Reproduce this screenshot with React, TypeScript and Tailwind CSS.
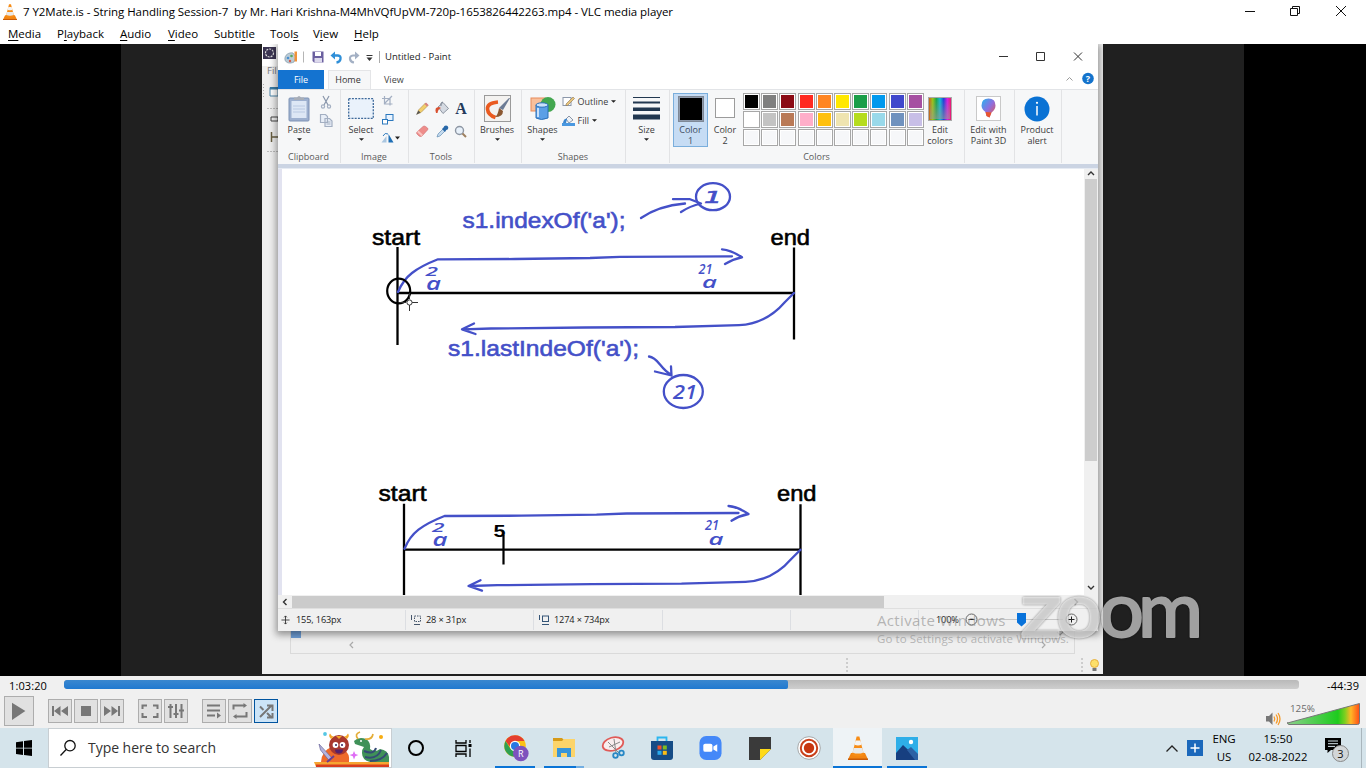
import React from "react";
import type { ReactNode } from "react";

const INK = "#4450c8";

function Cone({ className }: { className: string }) {
  return (
    <svg viewBox="0 0 20 24" preserveAspectRatio="none" className={className}>
      <path d="M3 17h14l3 6.5H0z" fill="#f28412" />
      <path d="M0 22.5h20v1.5H0z" fill="#c85a08" />
      <path d="M8.6 0.5h2.8L16 19q-6 3-12 0z" fill="#f78c16" />
      <path d="M7.6 4.5h4.8l1.1 4.2q-3.5 1.5-7 0z" fill="#f4f4f4" />
      <path d="M5.7 12h8.6l1.1 4.4q-5.4 2.4-10.8 0z" fill="#e9e9e9" />
    </svg>
  );
}

function TitleBar() {
  return (
    <div className="flex h-6 shrink-0 items-center bg-white">
      <Cone className="ml-[3px] h-[16px] w-[14px]" />
      <span className="ml-[6px] w-[655px] whitespace-pre text-[11.5px] leading-none tracking-[-0.05px] text-black">
        {"7 Y2Mate.is - String Handling Session-7  by Mr. Hari Krishna-M4MhVQfUpVM-720p-1653826442263.mp4 - VLC media player"}
      </span>
      <svg className="ml-auto h-6 w-[130px]" viewBox="1236 0 130 24" fill="none" stroke="#111" strokeWidth="1">
        <path d="M1245 11.500h10" />
        <path d="M1290.500 8.500h7v7h-7zM1292.500 8.500v-2h7v7h-2" />
        <path d="M1336 6l10 10M1346 6l-10 10" />
      </svg>
    </div>
  );
}

const menus: { pre: string; key: string; post: string; w: string }[] = [
  { pre: "", key: "M", post: "edia", w: "w-[49px]" },
  { pre: "P", key: "l", post: "ayback", w: "w-[63px]" },
  { pre: "", key: "A", post: "udio", w: "w-[48px]" },
  { pre: "", key: "V", post: "ideo", w: "w-[46px]" },
  { pre: "Subti", key: "t", post: "le", w: "w-[56px]" },
  { pre: "Tool", key: "s", post: "", w: "w-[43px]" },
  { pre: "V", key: "i", post: "ew", w: "w-[41px]" },
  { pre: "", key: "H", post: "elp", w: "w-[40px]" },
];

function MenuBar() {
  return (
    <div className="flex h-5 shrink-0 items-center bg-white pl-2 text-[11.5px] leading-none text-black">
      {menus.map((m) => (
        <span key={m.key} className={"shrink-0 whitespace-nowrap " + m.w}>
          {m.pre}
          <span className="underline underline-offset-2">{m.key}</span>
          {m.post}
        </span>
      ))}
    </div>
  );
}

function Arrow() {
  return (
    <svg viewBox="0 0 6 3" className="h-[3px] w-[5px]">
      <path d="M0 0h6L3 3z" fill="#222" />
    </svg>
  );
}

function Group({ w, label, children }: { w: string; label?: string; children: ReactNode }) {
  return (
    <div className={"flex h-[73px] shrink-0 flex-col border-r border-[#e2e3e5] " + w}>
      <div className="flex h-[60px] justify-center">{children}</div>
      <div className="h-3 pr-px text-center text-[9px] leading-[13px] text-[#5a5a5a]">{label}</div>
    </div>
  );
}

function Big({ w, icon, label, label2, arrow }: { w: string; icon: ReactNode; label: string; label2?: string; arrow?: boolean }) {
  return (
    <div className={"flex shrink-0 flex-col items-center pr-[2px] pt-1 text-[9px] leading-[11px] text-[#3c3c3c] " + w}>
      <div className="flex h-[29px] items-center justify-center">{icon}</div>
      <span className="mt-px whitespace-nowrap">{label}</span>
      {label2 && <span className="whitespace-nowrap">{label2}</span>}
      {arrow && <div className="mt-[3px] flex h-[3px]"><Arrow /></div>}
    </div>
  );
}

const palette = [
  "#000000", "#7f7f7f", "#8b0a14", "#ff2a20", "#ff8522", "#ffe800", "#1a9e48", "#0099ee", "#4048cc", "#a650a2",
  "#ffffff", "#c3c3c3", "#b97a57", "#ffaec9", "#ffc00e", "#efe4b0", "#b5dc1e", "#99d9ea", "#7092be", "#c8bfe7",
  "#f6f7f9", "#f6f7f9", "#f6f7f9", "#f6f7f9", "#f6f7f9", "#f6f7f9", "#f6f7f9", "#f6f7f9", "#f6f7f9", "#f6f7f9",
];

function PaintTitle() {
  return (
    <div className="flex h-[26px] items-center bg-white">
      <svg viewBox="284 46 92 22" className="ml-[6px] h-[22px] w-[92px]">
        <path d="M285 60c-1-5 4-8 8-7l3 4-2 5c-4 2-8 1-9-2z" fill="#b9cbd6" stroke="#7e95a5" strokeWidth=".7" />
        <circle cx="288" cy="58" r="1.300" fill="#4a8fd0" /><circle cx="291.500" cy="56" r="1.300" fill="#57a85c" /><circle cx="290" cy="61" r="1.200" fill="#d25b4b" />
        <path d="M294.500 51.500h2.500v10h-2.500z" fill="#f0923a" />
        <path d="M303.500 51.500v11" stroke="#b5b5b5" />
        <path d="M312.500 51.500h11v11h-9.500l-1.500-1.500z" fill="#6a5f9f" />
        <path d="M315 52h6v4h-6z" fill="#fff" /><path d="M314.500 58h7.500v4.500h-7.500z" fill="#dcd9ec" />
        <path d="M332.500 55.500h5.500q3 .5 2.500 3.500t-4 3.500" fill="none" stroke="#2f8fd8" strokeWidth="2.300" />
        <path d="M335 51.500v8l-4.500-4z" fill="#2f8fd8" />
        <path d="M357 55.500h-4q-3.500.5-3 3.500t4 3.500" fill="none" stroke="#a3b0c4" strokeWidth="2.200" />
        <path d="M355 51.500v8l4.500-4z" fill="#a3b0c4" />
        <path d="M366.500 55.500h6" stroke="#333" /><path d="M366.500 57.500h6l-3 3.500z" fill="#333" />
      </svg>
      <span className="ml-[3px] h-3 w-px bg-[#aaa]" />
      <span className="ml-[5px] whitespace-nowrap text-[9.5px] leading-none text-[#222]">Untitled - Paint</span>
      <svg viewBox="998 46 100 22" className="ml-auto h-[22px] w-[100px]" fill="none" stroke="#333">
        <path d="M999 56.500h9M1036.500 52.500h8v8h-8zM1074 52.500l8 8M1082 52.500l-8 8" />
      </svg>
    </div>
  );
}

function PaintTabs() {
  return (
    <div className="flex h-[19px] items-stretch bg-white text-[9.500px] leading-[19px]">
      <div className="w-[46px] bg-[#1473d0] text-center text-[9px] text-white">File</div>
      <div className="ml-1 w-[43px] border border-b-0 border-[#e4e5e7] bg-[#f6f7f8] pr-[3px] text-center text-[9px] leading-[17px] text-[#333]">Home</div>
      <div className="ml-[13px] text-[9px] text-[#444]">View</div>
      <svg viewBox="1062 70 34 18" className="ml-auto mr-[2px] h-[18px] w-[34px]">
        <path d="M1066.500 80.500l3-3 3 3" fill="none" stroke="#999" />
        <circle cx="1088" cy="78.500" r="5.800" fill="#1473cc" />
        <text x="1088" y="82" textAnchor="middle" fontSize="9" fontWeight="700" fill="#fff">?</text>
      </svg>
    </div>
  );
}

function Ribbon() {
  return (
    <div className="flex h-[75px] border-t border-[#e2e4e7] bg-[#f6f7f8]">
      <Group w="w-[63px]" label="Clipboard">
        <Big w="w-[36px]" label="Paste" arrow icon={
          <svg viewBox="0 0 22 27" className="h-[27px] w-[22px]">
            <rect x="1" y="3" width="20" height="23" rx="1" fill="#9db0cf" stroke="#7f93b5" />
            <rect x="3.500" y="6" width="15" height="17" fill="#dde7f5" />
            <path d="M6 5V2.500h3q2-3 4 0h3V5z" fill="#a8aeb8" /><path d="M5 11h12M5 14h12M5 17h12" stroke="#b9c9e2" />
          </svg>} />
        <svg viewBox="318 93 18 36" className="mt-1 h-[36px] w-[18px]" fill="none" stroke="#a3afc2" strokeWidth="1.200">
          <path d="M323 95l5 9M329 95l-5 9" stroke="#8895aa" /><circle cx="323" cy="105.500" r="1.600" /><circle cx="329" cy="105.500" r="1.600" />
          <path d="M320.500 113.500h5l2 2v6h-7zM325 117.500h4.500l2.500 2.500v5.500h-7z" fill="#e8eef7" /><path d="M326.500 121h4M326.500 123h4" />
        </svg>
      </Group>
      <Group w="w-[68px]" label="Image">
        <Big w="w-[40px]" label="Select" arrow icon={
          <svg viewBox="0 0 26 21" className="h-[21px] w-[26px]"><rect x=".7" y=".7" width="24.600" height="19.600" fill="#eaf2fb" stroke="#3e6a9b" strokeWidth="1.300" strokeDasharray="2 1.200" /></svg>} />
        <svg viewBox="382 93 22 54" className="-ml-px mr-1 mt-[3px] h-[54px] w-[22px]" fill="none">
          <path d="M385.500 96v8h8M383 98.500h8v7M393 96l-8 8" stroke="#a3afc2" strokeWidth="1.200" />
          <rect x="387" y="114.500" width="7" height="6" fill="#e8f3ff" stroke="#2b78bd" /><rect x="383.500" y="119.500" width="5" height="4.500" fill="#fff" stroke="#2b78bd" />
          <path d="M389.500 134v8.500h5z" fill="#1e6fb5" /><path d="M387.500 136v6.500h-5z" fill="#a9c6e0" /><path d="M384 136q2-4 5-2" stroke="#2b78bd" />
          <path d="M396 136.500h5l-2.500 3z" fill="#222" />
        </svg>
      </Group>
      <Group w="w-[66px]" label="Tools">
        <svg viewBox="413 93 58 54" className="mt-[3px] h-[54px] w-[58px]">
          <path d="M417 114l1.500-4 7-7 2.500 2.500-7 7z" fill="#f2cf6b" stroke="#a98a4a" strokeWidth=".6" /><path d="M424.500 104l1.500-1.500 2.500 2.500-1.500 1.500z" fill="#d98282" /><path d="M416 115l2.500-4.500 2 2z" fill="#555" />
          <path d="M438 107l5-4.500 5.500 6-5.500 5z" fill="#d5dae2" stroke="#78818f" strokeWidth=".8" /><path d="M436 113q-2-6 3-6l2 1q-3 1-3.500 5z" fill="#d9502f" /><path d="M441 106q-1-4 2-4" stroke="#78818f" fill="none" />
          <text x="461" y="114" textAnchor="middle" fontFamily="Liberation Serif, serif" fontWeight="700" fontSize="16" fill="#243a5c">A</text>
          <path d="M417 132l6-5.500q1-1 2.500 0l2 1.500q1 1 0 2l-5.500 6q-1.500 1-3 0l-2-2q-1-1 0-2z" fill="#ee8d8b" stroke="#cf6f70" strokeWidth=".6" /><path d="M417 132l4.500 4.300 1.500-1.500-4.500-4.300z" fill="#f9c4c0" />
          <path d="M437 137l1-3 5-5 2 2-5 5z" fill="#c4daee" stroke="#5381ab" strokeWidth=".6" /><path d="M442 129l1.500-1.500q.5-2 2.500-2t2.300 2-2 2.500L445 132z" fill="#2868a8" />
          <circle cx="459.500" cy="130.500" r="4" fill="#e8f1fa" stroke="#8d96a3" strokeWidth="1.400" /><path d="M462.500 133.500l3.500 3.500" stroke="#9d8060" strokeWidth="2" />
        </svg>
      </Group>
      <Group w="w-[47px]">
        <Big w="w-[44px]" label="Brushes" arrow icon={
          <svg viewBox="0 0 27 27" className="h-[27px] w-[27px]">
            <rect x=".5" y=".5" width="26" height="26" fill="#f3f2f0" stroke="#9a9a9a" />
            <path d="M14 7Q3 8 3.500 14t8 8.500" fill="none" stroke="#ea5a1f" strokeWidth="3.600" />
            <path d="M26 3l-7 12-4-2 10-10z" fill="#6b7b94" /><path d="M15 13l4 3q0 6-8 6 3-2 4-9z" fill="#8c5830" />
          </svg>} />
      </Group>
      <Group w="w-[104px]" label="Shapes">
        <Big w="w-[38px]" label="Shapes" arrow icon={
          <svg viewBox="0 0 26 26" className="h-[26px] w-[26px]">
            <rect x="1" y="2" width="14" height="13" fill="#f9c09c" stroke="#e78b5a" /><circle cx="18" cy="8.500" r="7.500" fill="#43a750" />
            <path d="M6 9v13q5 3 12 0V9z" fill="#5b9fe6" stroke="#2b6fb8" /><ellipse cx="12" cy="9" rx="6" ry="2.200" fill="#c9e1fb" stroke="#2b6fb8" /><path d="M8 12v9" stroke="#c9e1fb" strokeWidth="2" />
          </svg>} />
        <div className="-ml-px flex w-[61px] flex-col gap-[7px] pt-[6px] text-[9px] leading-[11px] text-[#3c3c3c]">
          <div className="flex items-center gap-[3px]">
            <svg viewBox="0 0 13 11" className="h-[11px] w-[13px]"><rect x="1" y="1.500" width="8" height="8" fill="#fff" stroke="#8c98aa" /><path d="M4 8l7-7 1.500 1.500-7 7H4z" fill="#e9c57b" stroke="#8a7350" strokeWidth=".6" /></svg>
            Outline<Arrow />
          </div>
          <div className="flex items-center gap-[3px]">
            <svg viewBox="0 0 13 12" className="h-[12px] w-[13px]"><path d="M0 9h13v3H0z" fill="#4a98e0" /><path d="M4 5l3-3 4 4-4 3z" fill="#eef2f7" stroke="#6f7e93" strokeWidth=".8" /><path d="M1 9q1-5 4-4l-1 4z" fill="#3b86ce" /></svg>
            Fill<Arrow />
          </div>
        </div>
      </Group>
      <Group w="w-[44px]">
        <Big w="w-[40px]" label="Size" arrow icon={
          <svg viewBox="0 0 27 23" className="h-[23px] w-[27px]" fill="#223850"><path d="M0 0h27v1H0zM0 4.500h27v2H0zM0 10.500h27v3.500H0zM0 17.500h27v5H0z" /></svg>} />
      </Group>
      <Group w="w-[295px]" label="Colors">
        <div className="flex w-full pl-[3px]">
          <div className="mt-[3px] flex h-[54px] w-[35px] flex-col items-center border border-[#7aaedc] bg-[#c6dcf4] pt-[2px] text-[9px] leading-[11px] text-[#3c4a5c]">
            <div className="mb-[2px] h-[26px] w-[26px] shrink-0 border border-[#7e8896] bg-black outline outline-1 -outline-offset-2 outline-[#8f9aab]" />
            <span>Color</span><span>1</span>
          </div>
          <div className="mt-[3px] flex w-[34px] flex-col items-center pt-[5px] text-[9px] leading-[11px] text-[#3c3c3c]">
            <div className="mb-[6px] h-[20px] w-[20px] border border-[#9b9b9b] bg-white" />
            <span>Color</span><span>2</span>
          </div>
          <div className="ml-px mt-[3px] grid h-[54px] w-[182px] grid-cols-10">
            {palette.map((c, i) => (
              <div key={i} className="h-[17px] w-[17px] border border-[#a7a7a7] bg-white p-px">
                <div className="h-full w-full" style={{ backgroundColor: c }} />
              </div>
            ))}
          </div>
          <Big w="w-[32px]" label="Edit" label2="colors" icon={
            <div className="h-6 w-6 border border-[#aaa] bg-[linear-gradient(90deg,#c8601e,#9ac414,#1aa34a,#12b9d6,#1e3fd8,#d61ee0,#e81e6a)] p-px">
              <div className="h-full w-full bg-gradient-to-b from-transparent to-[#9a9a9aa0]" />
            </div>} />
        </div>
      </Group>
      <Group w="w-[50px]">
        <Big w="w-[48px]" label="Edit with" label2="Paint 3D" icon={
          <svg viewBox="0 0 25 25" className="h-[25px] w-[25px]">
            <defs><linearGradient id="pin" x1="0" y1="0" x2="1" y2="1"><stop offset="0" stopColor="#23b5f0" /><stop offset=".5" stopColor="#8d6fe0" /><stop offset="1" stopColor="#f0543c" /></linearGradient></defs>
            <rect x=".5" y=".5" width="24" height="24" fill="#fff" stroke="#c9c9c9" />
            <path d="M12.500 2.500q7 0 7 7 0 4-4 7l-2 5-3-1.500-1-4q-4-3-4-6.500 0-7 7-7z" fill="url(#pin)" /><path d="M9.500 16l6 .5-2 5-3-1.500z" fill="#e8542e" />
          </svg>} />
      </Group>
      <Group w="w-[47px]">
        <Big w="w-[46px]" label="Product" label2="alert" icon={
          <svg viewBox="0 0 26 26" className="h-[26px] w-[26px]"><circle cx="13" cy="13" r="12.500" fill="#0a72d4" /><path d="M13 10v9.500" stroke="#fff" strokeWidth="1.500" /><circle cx="13" cy="6.800" r="1.100" fill="#fff" /></svg>} />
      </Group>
    </div>
  );
}

function Track() {
  return (
    <g fill="none" strokeLinecap="round" strokeLinejoin="round">
      <path d="M397.500 247v98M794 247.500v92M397.500 293H794" stroke="#000" strokeWidth="2.300" strokeLinecap="butt" />
      <path d="M398 292Q403 280 412 273T438 259.300L515 259L590 258L620 256.800L732 256.300M722 249.300Q731 250 742 257.300Q733 259 725 264" stroke={INK} strokeWidth="2.300" />
      <path d="M794 293L785 302Q766 324 739 325.200L675 327L585 327.500L491 328.500L463 329.300M474 323.500L462 329.300L475.500 334" stroke={INK} strokeWidth="2.300" />
      <g stroke="none" fontFamily="Liberation Sans, Arial, sans-serif">
        <text x="372" y="244.800" fontSize="22" textLength="48" lengthAdjust="spacingAndGlyphs" fill="#000" stroke="#000" strokeWidth=".6">start</text>
        <text x="770.500" y="244.500" fontSize="22" textLength="39.500" lengthAdjust="spacingAndGlyphs" fill="#000" stroke="#000" strokeWidth=".6">end</text>
        <g fill={INK} fontWeight="600" fontFamily="Open Sans, Noto Sans, sans-serif" fontStyle="italic">
          <text x="425.500" y="275.500" fontSize="12.500" textLength="12.500" lengthAdjust="spacingAndGlyphs">2</text>
          <text x="426" y="289.500" fontSize="18" textLength="15" lengthAdjust="spacingAndGlyphs">a</text>
          <text x="698.500" y="273.500" fontSize="13.500" textLength="14" lengthAdjust="spacingAndGlyphs">21</text>
          <text x="702" y="288" fontSize="15.500" textLength="15" lengthAdjust="spacingAndGlyphs">a</text>
        </g>
      </g>
    </g>
  );
}

function Canvas() {
  return (
    <svg viewBox="282 169 802 426" className="h-[426px] w-[802px] shrink-0 bg-white">
      <Track />
      <g transform="translate(6.500 256.700)"><Track /></g>
      <g fill="none" stroke="#000" strokeWidth="2.200">
        <ellipse cx="398.700" cy="291" rx="11.500" ry="12.300" />
        <path d="M503.500 535v29.500" />
      </g>
      <g fill="none" stroke="#333" strokeWidth="1"><path d="M400 302.500h6M412 302.500h6M409.500 293v6M409.500 305v6" /><circle cx="409.500" cy="302.500" r="2.600" fill="#fff" /></g>
      <g fill="none" stroke={INK} strokeWidth="2.300" strokeLinecap="round" strokeLinejoin="round">
        <path d="M641 218Q658 206 685 203.500M673 199.200L690 199.200L701 203.500Q690 206 681 212" />
        <ellipse cx="713" cy="196.700" rx="17" ry="13.500" />
        <path d="M649 356.500Q654 357 660 364.500T671 374.500M671 366.500L671.500 375.500L655 371.500" />
        <ellipse cx="683.300" cy="391.500" rx="19.500" ry="16.500" />
      </g>
      <g fontFamily="Liberation Sans, Arial, sans-serif" fill={INK}>
        <text x="462.500" y="228" fontSize="22.500" textLength="163" lengthAdjust="spacingAndGlyphs" stroke={INK} strokeWidth=".6">s1.indexOf('a');</text>
        <text x="448" y="356.300" fontSize="22.500" textLength="191" lengthAdjust="spacingAndGlyphs" stroke={INK} strokeWidth=".6">s1.lastIndeOf('a');</text>
        <text x="704" y="203" fontSize="16" fontFamily="DejaVu Sans, sans-serif" textLength="18" lengthAdjust="spacingAndGlyphs" fontStyle="italic" stroke={INK} strokeWidth=".6">1</text>
        <text x="673" y="398.500" fontSize="19" fontWeight="600" fontFamily="Open Sans, Noto Sans, sans-serif" fontStyle="italic" textLength="24" lengthAdjust="spacingAndGlyphs">21</text>
        <text x="493.500" y="536.500" fontSize="17" fontWeight="700" textLength="12" lengthAdjust="spacingAndGlyphs" fill="#000">5</text>
      </g>
    </svg>
  );
}

function PaintStatus() {
  const cell = "flex h-[20px] shrink-0 items-center border-r border-[#dcdee2]";
  return (
    <div className="flex h-[22px] items-center bg-[#f0f0f0] text-[9.200px] leading-none tracking-[-0.15px] text-[#222]">
      <div className={cell + " w-[128px] pl-[3px]"}>
        <svg viewBox="0 0 10 10" className="mr-[6px] h-[10px] w-[9px]" fill="none" stroke="#333"><path d="M5 .5v9M.5 5h9M3.500 2L5 .5 6.500 2M3.500 8L5 9.500 6.500 8" /></svg>155, 163px
      </div>
      <div className={cell + " w-[128px] pl-[4px]"}>
        <svg viewBox="0 0 12 10" className="mr-[4px] h-[10px] w-[12px]" fill="none" stroke="#46566b"><path d="M1.500 0v5M4 9.500h6" /><rect x="4.500" y="1" width="6" height="5.500" strokeDasharray="1.500 1" /></svg>28 × 31px
      </div>
      <div className={cell + " w-[129px] pl-[4px]"}>
        <svg viewBox="0 0 12 10" className="mr-[4px] h-[10px] w-[12px]" fill="none" stroke="#355577"><path d="M1.500 0v5M4 9.500h7" /><rect x="4.500" y="1" width="6" height="5.500" /></svg>1274 × 734px
      </div>
      <div className={cell + " w-[128px]"} />
      <div className={cell + " w-[128px]"} />
      <span className="ml-[17px] w-[28px]">100%</span>
      <svg viewBox="964 610 122 20" className="h-5 w-[122px] shrink-0" fill="none" stroke="#666">
        <circle cx="971.500" cy="619.500" r="5.500" /><path d="M968.500 619.500h6" stroke="#222" />
        <path d="M979 619.500h84" stroke="#c5c5c5" />
        <path d="M1017 613h9v9.500l-4.500 4-4.500-4z" fill="#0872da" stroke="none" />
        <circle cx="1071.500" cy="619.500" r="5.500" /><path d="M1068.500 619.500h6M1071.500 616.500v6" stroke="#222" />
      </svg>
    </div>
  );
}

function PaintWindow() {
  return (
    <div className="absolute left-4 top-0 flex h-[587px] w-[820px] flex-col bg-[#f0f0f0] shadow-[0_2px_7px_2px_rgba(0,0,0,0.38)]">
      <PaintTitle />
      <PaintTabs />
      <Ribbon />
      <div className="h-[5px] border-b border-[#e6ebf3] bg-[#cbd4e3]" />
      <div className="flex h-[426px]">
        <div className="w-1 bg-[#e2e3f0]" />
        <Canvas />
        <div className="flex w-[13px] flex-col items-center bg-[#f0f0f0]">
          <svg viewBox="0 0 12 10" className="h-[10px] w-3" fill="none" stroke="#333" strokeWidth="1.400"><path d="M3 6l3-3 3 3" /></svg>
          <div className="h-[282px] w-[12px] bg-[#cdcdcd]" />
          <svg viewBox="0 0 12 10" className="mb-[2px] mt-auto h-[10px] w-3" fill="none" stroke="#333" strokeWidth="1.400"><path d="M3 3l3 3 3-3" /></svg>
        </div>
      </div>
      <div className="flex h-[13px] items-center bg-[#f0f0f0]">
        <svg viewBox="0 0 14 12" className="h-3 w-[14px]" fill="none" stroke="#333" strokeWidth="1.400"><path d="M8.500 3l-3 3 3 3" /></svg>
        <div className="h-[12px] w-[592px] bg-[#cbcbcb]" />
        <svg viewBox="0 0 14 12" className="ml-auto mr-[15px] h-3 w-[14px]" fill="none" stroke="#666" strokeWidth="1.400"><path d="M5.500 3l3 3-3 3" /></svg>
      </div>
      <div className="h-px bg-[#dfdfdf]" />
      <PaintStatus />
    </div>
  );
}

function BackWindow() {
  return (
    <div className="flex h-[630px] w-full flex-col bg-[#efefef]">
      <svg viewBox="262 44 16 586" className="h-[586px] w-4" fill="none">
        <path d="M262 44h16v22h-16z" fill="#fff" />
        <rect x="263" y="47" width="13" height="12" fill="#3b3552" /><circle cx="269.500" cy="53" r="4" stroke="#ddd" strokeWidth="1.200" strokeDasharray="2 1" />
        <text x="267" y="74" fontSize="9.500" fill="#777">Fil</text>
        <path d="M263.500 84v14" stroke="#aaa" strokeDasharray="1 2" />
        <path d="M270 87.500h8v8.500h-8z" fill="#fff" stroke="#4a84a8" /><path d="M270 87h8v2.500h-8z" fill="#397aa4" />
        <path d="M267 108.500h11M267 151.500h11" stroke="#bbb" strokeDasharray="2 1" />
        <path d="M271 117h7v4h-7z" stroke="#444" /><path d="M271.500 132v10M271 137h7" stroke="#665d40" strokeWidth="1.500" />
      </svg>
      <div className="ml-[28px] mr-[28px] flex h-[24px] items-start border-b border-l border-r border-[#dadada]">
        <div className="h-2 w-[10px] bg-[#6f9fd8]" />
        <svg viewBox="300 630 770 24" className="h-6 w-[770px]" fill="none" stroke="#aaa" strokeWidth="1.200"><path d="M352 642l-3 3 3 3M1041 642l3 3-3 3M1056 632l3 3 3-3" /></svg>
      </div>
      <svg viewBox="262 654 841 20" className="h-5 w-[841px]" fill="none">
        <path d="M847 658v14M1082 658v14" stroke="#aaa" strokeDasharray="2 2" />
        <circle cx="1094.500" cy="663.500" r="4" fill="#fde06a" stroke="#e6b040" /><path d="M1092.500 668h4v3h-4z" fill="#777" />
      </svg>
    </div>
  );
}

function ZoomMark() {
  return (
    <svg viewBox="1005 550 210 120" className="absolute left-[1005px] top-[506px] h-[120px] w-[210px] drop-shadow-[0_0_1px_rgba(0,0,0,0.75)]">
      <g fontFamily="Lato, Inter, sans-serif" fontSize="77" fill="#fff" stroke="#fff" strokeWidth="2.200" strokeLinejoin="round" opacity=".6">
        <text y="637">
          <tspan x="1020" textLength="42" lengthAdjust="spacingAndGlyphs">z</tspan>
          <tspan x="1056" textLength="46" lengthAdjust="spacingAndGlyphs">o</tspan>
          <tspan x="1099" textLength="45" lengthAdjust="spacingAndGlyphs">o</tspan>
          <tspan x="1138" textLength="65" lengthAdjust="spacingAndGlyphs">m</tspan>
        </text>
      </g>
    </svg>
  );
}

function Video() {
  return (
    <div className="relative flex h-[632px] shrink-0 justify-center overflow-hidden bg-black pr-px">
      <div className="flex h-full w-[1123px] bg-[#202020] pl-[141px]">
        <div className="relative h-[632px] w-[841px]">
          <BackWindow />
          <PaintWindow />
        </div>
      </div>
      <div className="absolute left-[877px] top-[566px] whitespace-nowrap text-[#8b8b8b]/60">
        <div className="text-[15px] leading-[20px] tracking-[0.35px]">Activate Windows</div>
        <div className="mt-px text-[11.5px] leading-[15px] tracking-[0.1px]">Go to Settings to activate Windows.</div>
      </div>
      <ZoomMark />
    </div>
  );
}

function VlcBtn({ on, big, children }: { on?: boolean; big?: boolean; children: ReactNode }) {
  return (
    <div className={"flex shrink-0 items-center justify-center border " + (big ? "h-[30px] w-[30px] " : "h-6 w-6 ") + (on ? "border-[#00549f] bg-[#cce4f7]" : "border-[#adadad] bg-[#e1e1e1]")}>
      <svg viewBox="0 0 22 22" className={big ? "h-7 w-7" : "h-[22px] w-[22px]"} fill="none" stroke="#777" strokeWidth="2">{children}</svg>
    </div>
  );
}

function VlcControls() {
  return (
    <div className="flex h-[52px] shrink-0 flex-col bg-[#f0f0f0]">
      <div className="flex h-[19px] items-center text-[11px] leading-none text-black">
        <span className="w-[64px] shrink-0 pl-[9px] tracking-[0.1px]">1:03:20</span>
        <div className="h-[9px] w-[1235px] shrink-0 -translate-y-px overflow-hidden rounded-[3px] bg-gradient-to-b from-[#b9b9b9] to-[#cecece]">
          <div className="h-full w-[724px] rounded-[2px] bg-gradient-to-b from-[#3a87cf] to-[#2079d0]" />
        </div>
        <span className="ml-auto mr-[7px] tracking-[0.05px]">-44:39</span>
      </div>
      <div className="flex h-[33px] items-center pb-[1px] pl-1">
        <VlcBtn big><path d="M5.500 4.500l10.500 6.500-10.500 7z" fill="#777" stroke="none" /></VlcBtn>
        <div className="ml-[14px] flex gap-[2px]">
          <VlcBtn><path d="M4 6v10" /><path d="M11.500 6v10L5 11zM19 6v10l-7-5z" fill="#777" stroke="none" /></VlcBtn>
          <VlcBtn><path d="M6 6h10v10H6z" fill="#777" stroke="none" /></VlcBtn>
          <VlcBtn><path d="M18 6v10" /><path d="M3 6v10l7-5zM10.500 6v10l6.500-5z" fill="#777" stroke="none" /></VlcBtn>
        </div>
        <div className="ml-[14px] flex gap-[2px]">
          <VlcBtn><path d="M3.500 9V5.500H8M14 5.500h4.500V9M18.500 13v4H14M8 17H3.500v-4" /></VlcBtn>
          <VlcBtn><path d="M5.500 4v14M11 4v14M16.500 4v14M3 7h5M8.500 14h5M14 10.500h5" /></VlcBtn>
        </div>
        <div className="ml-[14px] flex gap-[2px]">
          <VlcBtn><path d="M4 5.500h13M4 10.500h13M4 15.500h8" /><path d="M14 12.500v6l4-3z" fill="#777" stroke="none" /></VlcBtn>
          <VlcBtn><path d="M4.500 9.500V5.500H15M17.500 12v4.500H7" /><path d="M14.500 3v5l3.500-2.500zM7.500 14v5L4 16.500z" fill="#777" stroke="none" /></VlcBtn>
          <VlcBtn on><path d="M5 17L16.500 5.500M5 6.500l3.500 3.500M12 13l5 5M12 5.500h5.500V11M17.500 13v4.500H12" /></VlcBtn>
        </div>
        <svg viewBox="1262 695 104 32" className="ml-auto h-8 w-[104px]">
          <defs><linearGradient id="vol"><stop offset="0" stopColor="#8bd08b" /><stop offset=".7" stopColor="#1ecb1e" /><stop offset=".8" stopColor="#7fcf20" /><stop offset=".88" stopColor="#ffb726" /><stop offset="1" stopColor="#ff4b16" /></linearGradient></defs>
          <path d="M1266 716h3l3.500-3.500v12.500l-3.500-3.500h-3z" fill="#777" />
          <path d="M1274 716.500q1.500 2.500 0 5M1276 714.500q3 4.500 0 9M1278 713q4 6 0 12" fill="none" stroke="#f69a28" strokeWidth="1.300" />
          <path d="M1287.500 723L1359.500 703.500v19q0 2-2 2h-68.500q-2-.5-1.500-2z" fill="url(#vol)" stroke="#777" strokeWidth="1" />
          <text x="1290" y="711.500" fontSize="9.300" textLength="25" lengthAdjust="spacingAndGlyphs" fill="#6a6a6a">125%</text>
        </svg>
      </div>
    </div>
  );
}

function Task({ children, bar, active }: { children: ReactNode; bar?: string; active?: boolean }) {
  return (
    <div className={"flex h-10 w-[49px] shrink-0 flex-col items-center " + (active ? "bg-[#eef3f6]" : "")}>
      <div className="flex h-[38px] items-center justify-center pt-[2px]">{children}</div>
      {bar && <div className={"h-[2px] bg-[#0a74d6] " + bar} />}
    </div>
  );
}

function SearchArt() {
  return (
    <svg viewBox="314 730 76 38" className="h-[38px] w-[76px]">
      <path d="M314 763h75v5h-73z" fill="#f6a531" /><path d="M316 765.500h73v2.500h-73z" fill="#d93c1e" />
      <path d="M321 763q1-12 11-15l12 3q6 3 5 12z" fill="#ee6a2a" />
      <circle cx="339" cy="746" r="10" fill="#a8382e" />
      <path d="M331 740q-3-3-1-5.500 1 2.500 4 3zM347 740q3-3 1-5.500-1 2.500-4 3z" fill="#f5a628" />
      <path d="M336 737l3 3 3-3z" fill="#f5a628" />
      <circle cx="335.500" cy="746" r="2.900" fill="#fff" /><circle cx="342.500" cy="746" r="2.900" fill="#fff" /><circle cx="336" cy="746" r="1" fill="#30205a" /><circle cx="342" cy="746" r="1" fill="#30205a" />
      <path d="M335 750.500h8q0 4-4 4t-4-4z" fill="#56206a" />
      <path d="M319 745l13 14-2.500 3-9-11z" fill="#b4b4dc" stroke="#6a659b" strokeWidth=".7" /><path d="M327 763l7-6" stroke="#6c3c8c" strokeWidth="2" />
      <path d="M354 752l1.300 3 3 1-3 1.200-1.300 3.300-1.200-3.300-3.300-1.200 3.300-1z" fill="#df6df5" />
      <path d="M354 742q5-5 12-2 5 3 4 10 5 4 10 0 8 1 9 8v5h-19q-8-2-8-9 0-4 2-6l-9-3z" fill="#3f9158" />
      <path d="M364 752q10 4 12-3M365 758q12 3 16-7M370 762q12 0 17-8" stroke="#344b75" strokeWidth="2" fill="none" />
      <path d="M358 740q-4-5 2-7M365 740q7 1 8-5" fill="none" stroke="#e4ad38" strokeWidth="1.700" /><circle cx="361" cy="742" r="1" fill="#fff" />
      <circle cx="325" cy="735" r="1.900" fill="#55c7e4" /><circle cx="381" cy="738" r="2" fill="#f7ac10" />
    </svg>
  );
}

function Taskbar() {
  return (
    <div className="flex h-10 shrink-0 items-center bg-[#d5e4eb] text-black">
      <div className="flex w-12 items-center justify-center">
        <svg viewBox="0 0 16 16" className="h-4 w-4"><path d="M0 2.200L7 1.200v6.500H0zM8 1l8-1v7.700H8zM0 8.500h7V15l-7-1zM8 8.500h8V16l-8-1z" fill="#000" /></svg>
      </div>
      <div className="flex h-10 w-[344px] items-center border border-[#c8ced2] bg-white">
        <svg viewBox="0 0 18 18" className="ml-[10px] h-[18px] w-[18px]" fill="none" stroke="#111" strokeWidth="1.300"><circle cx="11" cy="6.700" r="5.200" /><path d="M7.200 10.500L1.500 16.500" /></svg>
        <span className="ml-[11px] w-[178px] whitespace-nowrap text-[14px] leading-none tracking-[-0.04px] text-[#333]">Type here to search</span>
        <div className="ml-[48px]"><SearchArt /></div>
      </div>
      <div className="flex w-12 justify-center"><div className="h-4 w-4 rounded-full border-2 border-black" /></div>
      <div className="flex w-[50px] justify-center pr-[3px]">
        <svg viewBox="0 0 17 17" className="h-[17px] w-[17px]" fill="none" stroke="#000" strokeWidth="1.300"><path d="M1 0v3h10V0M1 17v-3h10v3M1 5.500h10v6H1zM15 0v3M15 8.500V17" /><path d="M13.500 4h3v3h-3z" fill="#000" stroke="none" /></svg>
      </div>
      <Task bar="w-10">
        <svg viewBox="502 736 27 28" className="h-[28px] w-[27px] translate-x-px">
          <circle cx="515" cy="748" r="10.800" fill="#fbc116" /><path d="M505.500 743a10.800 10.800 0 0 1 19 0H515l-4 7z" fill="#e43e2f" /><path d="M505.500 743a10.800 10.800 0 0 0 9 15.800l5-8-9 0z" fill="#2fa052" />
          <circle cx="515" cy="748" r="5.200" fill="#fff" /><circle cx="515" cy="748" r="4" fill="#2878e2" />
          <circle cx="520.800" cy="755.500" r="7.800" fill="#7e52bd" /><text x="520.800" y="759" textAnchor="middle" fontSize="9" fill="#fff">R</text>
        </svg>
      </Task>
      <Task bar="w-10 bg-gradient-to-r from-[#0a74d6] from-80% to-[#72aee2] to-80%">
        <svg viewBox="0 0 22 20" className="h-5 w-[22px]"><path d="M0 0h9l2 2v3H0z" fill="#d69a18" /><path d="M0 3h9l2-2h11v18H0z" fill="#fcd46a" /><path d="M4 10h14v9h-4v-4H8v4H4z" fill="#3795d9" /></svg>
      </Task>
      <Task>
        <svg viewBox="0 0 24 24" className="h-6 w-6" fill="none"><ellipse cx="12" cy="8" rx="10.500" ry="6.500" transform="rotate(-16 12 8)" fill="#f8eeee" stroke="#e05a57" strokeWidth="1.800" /><path d="M13 3l2 14M7 6l11 11M19 6l-11 5" stroke="#888" /><circle cx="14.500" cy="19.500" r="2.300" stroke="#2787c5" strokeWidth="1.800" /><circle cx="20.500" cy="17" r="2.300" stroke="#2787c5" strokeWidth="1.800" /></svg>
      </Task>
      <Task>
        <svg viewBox="0 0 22 24" className="h-6 w-[22px]"><path d="M6.500 6V1.500h9V6" fill="none" stroke="#2bb6ef" strokeWidth="1.800" /><path d="M0 5h22v16q0 3-3 3H3q-3 0-3-3z" fill="#164c86" /><path d="M6.500 9.500h4v4h-4z" fill="#f2502b" /><path d="M11.800 9.500h4v4h-4z" fill="#7fbc20" /><path d="M6.500 14.800h4v4h-4z" fill="#28a9ed" /><path d="M11.800 14.800h4v4h-4z" fill="#fbbd16" /></svg>
      </Task>
      <Task>
        <svg viewBox="0 0 23 25" className="h-[24px] w-[23px]"><rect width="23" height="25" rx="7" fill="#4488f8" /><rect x="4" y="8" width="9.500" height="8.500" rx="2" fill="#fff" /><path d="M14.500 11l4-2.500v8l-4-2.500z" fill="#fff" /></svg>
      </Task>
      <Task>
        <svg viewBox="0 0 22 23" className="h-[23px] w-[22px]"><path d="M0 0h22v12L11 23H0z" fill="#3a3a3a" /><path d="M11 12h11L11 23z" fill="#ffda18" /></svg>
      </Task>
      <Task>
        <svg viewBox="0 0 24 24" className="h-6 w-6"><circle cx="12" cy="12" r="11.300" fill="#fff" stroke="#888" strokeWidth=".7" /><circle cx="12" cy="12" r="8.200" fill="#fff" stroke="#c9401a" strokeWidth="2" /><circle cx="12" cy="12" r="5.200" fill="#c7360f" /></svg>
      </Task>
      <Task active bar="w-[49px]"><Cone className="h-6 w-5" /></Task>
      <Task bar="w-10">
        <svg viewBox="0 0 22 23" className="h-[23px] w-[22px]"><path d="M0 0h22v23H0z" fill="#2eaee8" /><path d="M0 16l7-8 15 14v1H0z" fill="#173f80" /><path d="M11 13l4-3 7 7v6h-3z" fill="#2c61a4" /><circle cx="15" cy="5" r="2.200" fill="#fff" /></svg>
      </Task>
      <div className="ml-auto flex h-10 items-center">
        <svg viewBox="0 0 12 7" className="h-[7px] w-3" fill="none" stroke="#222" strokeWidth="1.300"><path d="M.5 6.500L6 1l5.500 5.500" /></svg>
        <svg viewBox="0 0 16 16" className="ml-[9px] h-4 w-4"><path d="M0 0h16v16H0z" fill="#1b68bb" /><path d="M8 3.500v9M3.500 8h9" stroke="#fff" strokeWidth="1.500" /></svg>
        <div className="ml-[9px] w-[24px] text-center text-[11.500px] leading-[18px] tracking-[-0.1px]"><div>ENG</div><div>US</div></div>
        <div className="ml-[12px] w-[60px] whitespace-nowrap text-center text-[11.300px] leading-[18px]"><div>15:50</div><div>02-08-2022</div></div>
        <svg viewBox="1325 736 25 28" className="ml-[17px] h-[28px] w-[25px]">
          <path d="M1325 740h16v12h-10l-3.500 3v-3h-2.500z" fill="#000" /><path d="M1328 743h10M1328 745.700h10M1328 748.400h7" stroke="#d5e4eb" />
          <circle cx="1340.500" cy="755.500" r="8" fill="#d2d6d8" stroke="#888" /><text x="1340.500" y="759.500" textAnchor="middle" fontSize="11" fill="#111">3</text>
        </svg>
        <div className="ml-[11px] mr-1 h-10 w-px bg-[#a9b6bd]" />
      </div>
    </div>
  );
}

export default function App() {
  return (
    <div className="flex h-[768px] w-[1366px] flex-col overflow-hidden bg-white font-['Open_Sans','Noto_Sans',sans-serif]">
      <TitleBar />
      <MenuBar />
      <Video />
      <VlcControls />
      <Taskbar />
    </div>
  );
}
